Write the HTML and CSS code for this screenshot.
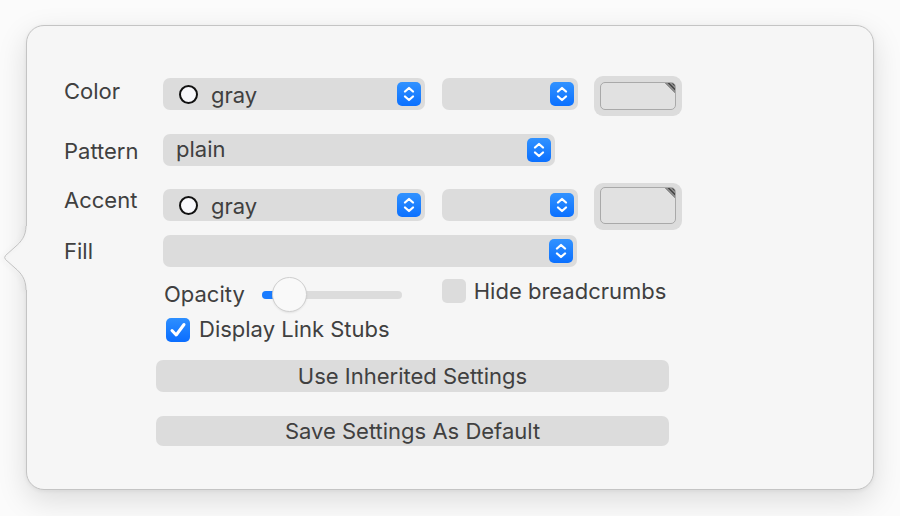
FILE: index.html
```html
<!DOCTYPE html>
<html>
<head>
<meta charset="utf-8">
<link rel="stylesheet" href="styles.css">
</head>
<body>
<div class="panel">
  <svg class="notch" width="30" height="64" viewBox="0 0 30 64">
    <path class="notch-fill" d="M23 0 C23 10 18 16 12 21 L2.5 29.5 Q0.8 31.5 2.5 33.5 L12 42 C18 47 23 53 23 64 L27 64 L27 0 Z"/>
    <path class="notch-line" d="M23 0 C23 10 18 16 12 21 L2.5 29.5 Q0.8 31.5 2.5 33.5 L12 42 C18 47 23 53 23 64"/>
  </svg>

  <div class="row row-color">
    <span class="label">Color</span>
    <div class="popup pop-main">
      <span class="swatch"></span><span class="ptext">gray</span>
      <span class="stepper"><svg width="24" height="24" viewBox="0 0 24 24"><path d="M8 9.5 L12 6 L16 9.5 M8 14.5 L12 18 L16 14.5"/></svg></span>
    </div>
    <div class="popup pop-small">
      <span class="stepper"><svg width="24" height="24" viewBox="0 0 24 24"><path d="M8 9.5 L12 6 L16 9.5 M8 14.5 L12 18 L16 14.5"/></svg></span>
    </div>
    <div class="well"><div class="well-inner"><span class="corner"></span></div></div>
  </div>

  <div class="row row-pattern">
    <span class="label">Pattern</span>
    <div class="popup pop-pattern">
      <span class="ptext plain">plain</span>
      <span class="stepper"><svg width="24" height="24" viewBox="0 0 24 24"><path d="M8 9.5 L12 6 L16 9.5 M8 14.5 L12 18 L16 14.5"/></svg></span>
    </div>
  </div>

  <div class="row row-accent">
    <span class="label">Accent</span>
    <div class="popup pop-main">
      <span class="swatch"></span><span class="ptext">gray</span>
      <span class="stepper"><svg width="24" height="24" viewBox="0 0 24 24"><path d="M8 9.5 L12 6 L16 9.5 M8 14.5 L12 18 L16 14.5"/></svg></span>
    </div>
    <div class="popup pop-small">
      <span class="stepper"><svg width="24" height="24" viewBox="0 0 24 24"><path d="M8 9.5 L12 6 L16 9.5 M8 14.5 L12 18 L16 14.5"/></svg></span>
    </div>
    <div class="well well-big"><div class="well-inner"><span class="corner"></span></div></div>
  </div>

  <div class="row row-fill">
    <span class="label">Fill</span>
    <div class="popup pop-fill">
      <span class="stepper"><svg width="24" height="24" viewBox="0 0 24 24"><path d="M8 9.5 L12 6 L16 9.5 M8 14.5 L12 18 L16 14.5"/></svg></span>
    </div>
  </div>

  <div class="row row-opacity">
    <span class="opacity-label">Opacity</span>
    <div class="slider">
      <div class="track"><div class="track-fill"></div></div>
      <div class="knob"></div>
    </div>
    <span class="check"></span>
    <span class="check-text hide-text">Hide breadcrumbs</span>
  </div>

  <div class="row row-stubs">
    <span class="check checked"><svg width="24" height="24" viewBox="0 0 24 24"><path d="M6 12.5 L10.2 17 L18 6.5"/></svg></span>
    <span class="check-text">Display Link Stubs</span>
  </div>

  <div class="button btn-inherit">Use Inherited Settings</div>
  <div class="button btn-save">Save Settings As Default</div>
</div>
</body>
</html>
```

FILE: styles.css
```css
html, body {
  margin: 0;
  padding: 0;
}
body {
  width: 900px;
  height: 516px;
  overflow: hidden;
  background: #fbfbfb;
  font-family: Inter, "Helvetica Neue", Arial, sans-serif;
  font-size: 22px;
  line-height: 26px;
  color: #404040;
}
.panel {
  position: relative;
  box-sizing: border-box;
  margin: 25px 0 0 26px;
  width: 848px;
  height: 465px;
  background: #f6f6f6;
  border: 1px solid #c4c4c4;
  border-radius: 18px;
  box-shadow: 0 10px 30px rgba(0, 0, 0, 0.13), 0 1px 4px rgba(0, 0, 0, 0.06);
  padding: 50px 0 0 37px;
}
.notch {
  position: absolute;
  left: -24px;
  top: 200px;
  overflow: visible;
}
.notch-fill {
  fill: #f6f6f6;
}
.notch-line {
  fill: none;
  stroke: #c2c2c2;
  stroke-width: 1;
  filter: drop-shadow(-2px 1px 2px rgba(0, 0, 0, 0.10));
}
.row {
  display: flex;
  align-items: flex-start;
}
.label {
  width: 99px;
  flex: none;
}
.row-color { height: 40px; }
.row-color .label { margin-top: 2px; }
.row-color .popup { margin-top: 2px; }
.row-pattern { height: 32px; margin-top: 18px; }
.row-pattern .label { margin-top: 4px; }
.row-accent { height: 47px; margin-top: 17px; }
.row-accent .label { margin-top: 4px; }
.row-accent .popup { margin-top: 6px; }
.row-fill { height: 32px; margin-top: 5px; }
.row-fill .label { margin-top: 3px; }

.popup {
  position: relative;
  box-sizing: border-box;
  height: 32px;
  background: #dcdcdc;
  border-radius: 7px;
  display: flex;
  align-items: center;
  flex: none;
}
.pop-main { width: 262px; }
.pop-small { width: 136px; margin-left: 17px; }
.pop-pattern { width: 392px; }
.pop-fill { width: 414px; }
.swatch {
  width: 19px;
  height: 19px;
  box-sizing: border-box;
  border: 2px solid #111;
  border-radius: 50%;
  background: #f8f8fb;
  margin-left: 16px;
  margin-right: 13px;
  margin-top: 1px;
}
.ptext {
  color: #404040;
  margin-top: 1px;
}
.plain { margin-left: 13px; margin-top: -2px; }
.stepper {
  position: absolute;
  right: 4px;
  top: 4px;
  width: 24px;
  height: 24px;
  border-radius: 5px;
  background: linear-gradient(#3192ff, #0b70ff);
}
.stepper svg {
  display: block;
}
.stepper path {
  fill: none;
  stroke: #fff;
  stroke-width: 2.3;
  stroke-linecap: round;
  stroke-linejoin: round;
}
.well {
  box-sizing: border-box;
  width: 88px;
  height: 40px;
  margin-left: 16px;
  background: #dcdcdc;
  border-radius: 9px;
  padding: 6px;
}
.well-big {
  height: 47px;
  padding: 4px 6px 6px 6px;
}
.well-inner {
  position: relative;
  box-sizing: border-box;
  height: 100%;
  border: 1px solid #a9a9a9;
  border-radius: 5px;
  background: #e1e1e1;
  overflow: hidden;
}
.corner {
  position: absolute;
  right: 0;
  top: 0;
  width: 10px;
  height: 10px;
  background: repeating-linear-gradient(45deg, #4a4a4a 0 1.5px, #8a8a8a 1.5px 3px);
  clip-path: polygon(0 0, 100% 0, 100% 100%);
}

.row-opacity {
  height: 36px;
  margin-top: 10px;
  margin-left: 99px;
}
.opacity-label {
  margin-left: 1px;
  margin-top: 4px;
}
.slider {
  position: relative;
  width: 140px;
  height: 36px;
  margin-left: 17px;
}
.track {
  position: absolute;
  left: 0;
  right: 0;
  top: 14px;
  height: 8px;
  border-radius: 4px;
  background: #dcdcdc;
}
.track-fill {
  width: 16px;
  height: 100%;
  border-radius: 4px;
  background: #1a7cff;
}
.knob {
  position: absolute;
  left: 10px;
  top: 0;
  width: 35px;
  height: 35px;
  box-sizing: border-box;
  border-radius: 50%;
  background: #f9f9f9;
  border: 1px solid #cfcfcf;
  box-shadow: 0 1px 2px rgba(0, 0, 0, 0.08);
}
.check {
  flex: none;
  width: 24px;
  height: 24px;
  border-radius: 5px;
  background: #dcdcdc;
}
.row-opacity .check {
  margin-left: 40px;
  margin-top: 2px;
}
.check-text {
  margin-left: 8px;
}
.hide-text {
  margin-top: 1px;
}
.row-stubs {
  height: 24px;
  margin-top: 5px;
  margin-left: 102px;
  align-items: center;
}
.checked {
  background: linear-gradient(#2d8fff, #0a6dff);
}
.checked svg { display: block; }
.checked path {
  fill: none;
  stroke: #fff;
  stroke-width: 3;
  stroke-linecap: round;
  stroke-linejoin: round;
}
.row-stubs .check-text { margin-left: 9px; margin-top: -2px; }

.button {
  box-sizing: border-box;
  width: 513px;
  margin-left: 92px;
  background: #dcdcdc;
  border-radius: 7px;
  text-align: center;
  color: #404040;
}
.btn-inherit {
  height: 32px;
  line-height: 32px;
  margin-top: 18px;
}
.btn-save {
  height: 30px;
  line-height: 30px;
  margin-top: 24px;
}
```
